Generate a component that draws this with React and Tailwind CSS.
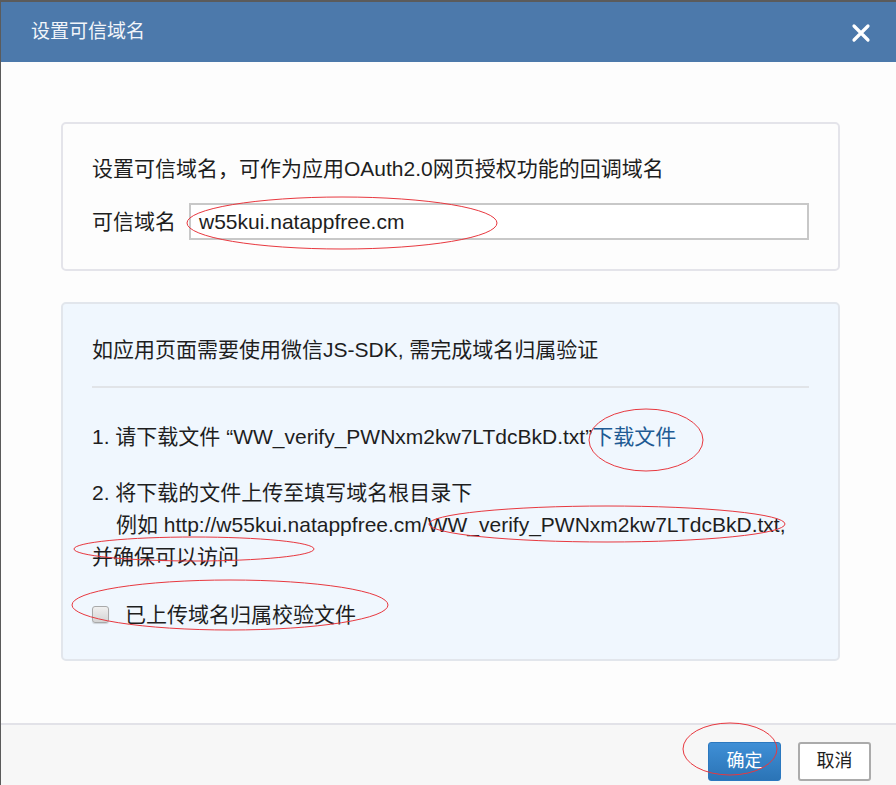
import React from 'react';

const font = { fontFamily: '"Liberation Sans", "Noto Sans CJK SC", sans-serif' };

const App = () => {
    return (
        <div className="relative w-[896px] h-[785px] overflow-hidden bg-[#5b5b5b] pt-[2px] pl-[1px]" style={font}>
            <div className="flex flex-col h-full bg-[#fdfdfd]">
                {/* Header */}
                <div className="h-[60px] shrink-0 bg-[#4c79ab] flex items-center justify-between pl-[30px] pr-[25px]">
                    <span className="text-[19px] text-[#f2f5fa]">设置可信域名</span>
                    <svg width="20" height="20" viewBox="0 0 20 20" className="mt-[1px]">
                        <path d="M3 3 L17 17 M17 3 L3 17" stroke="#ffffff" strokeWidth="3.2" strokeLinecap="round" />
                    </svg>
                </div>

                {/* Body */}
                <div className="flex-1 pl-[60px] pt-[60px] text-[21px] text-[#1e1e1e]">
                    <div className="w-[779px] border-2 border-[#e4e4ea] rounded-[5px] bg-[#fdfdfd] px-[29px] pt-[29px] pb-[29px]">
                        <div className="leading-[31px]">设置可信域名，可作为应用OAuth2.0网页授权功能的回调域名</div>
                        <div className="flex items-center mt-[19px]">
                            <span className="leading-[31px]">可信域名</span>
                            <div className="ml-[13px] flex-1 h-[37px] border-2 border-[#c8c8c8] bg-white flex items-center px-[8px]">
                                w55kui.natappfree.cm
                            </div>
                        </div>
                    </div>

                    <div className="w-[779px] mt-[31px] h-[359px] border-2 border-[#e2e6ec] rounded-[5px] bg-[#f0f7fe] px-[29px] pt-[30px]">
                        <div className="leading-[31px]">如应用页面需要使用微信JS-SDK, 需完成域名归属验证</div>
                        <div className="mt-[21px] h-[2px] bg-[#e1e4e8]" />
                        <div className="mt-[33px] leading-[31px]">
                            1. 请下载文件 “WW_verify_PWNxm2kw7LTdcBkD.txt”<span className="text-[#1f5b94]">下载文件</span>
                        </div>
                        <div className="mt-[25px] leading-[32px]">
                            <div>2. 将下载的文件上传至填写域名根目录下</div>
                            <div className="pl-[24px] whitespace-nowrap">例如 http://w55kui.natappfree.cm/WW_verify_PWNxm2kw7LTdcBkD.txt,</div>
                            <div>并确保可以访问</div>
                        </div>
                        <div className="mt-[26px] flex items-center">
                            <div className="w-[17px] h-[17px] rounded-[3px] border border-[#a9a9a9] bg-gradient-to-b from-[#f0f0f0] to-[#d4d4d4] shadow-[0_1px_1px_rgba(0,0,0,0.15)]" />
                            <span className="ml-[16px] leading-[31px]">已上传域名归属校验文件</span>
                        </div>
                    </div>
                </div>

                {/* Footer */}
                <div className="h-[62px] shrink-0 border-t-2 border-[#e2e2e8] bg-[#f7f7f7] flex justify-end items-start pt-[17px] pr-[25px] gap-[17px] text-[18px]">
                    <button className="w-[73px] h-[39px] rounded-[3px] border border-[#2b78bf] bg-gradient-to-b from-[#3f8fd6] to-[#2b74b6] text-white">
                        确定
                    </button>
                    <button className="w-[73px] h-[39px] rounded-[3px] border-2 border-[#ababab] bg-white text-[#1e1e1e]">
                        取消
                    </button>
                </div>
            </div>

            {/* red annotation marks */}
            <svg className="absolute inset-0 pointer-events-none" width="896" height="785" viewBox="0 0 896 785" fill="none">
                <ellipse cx="342" cy="223" rx="155" ry="26" stroke="#e8383f" strokeWidth="1" />
                <ellipse cx="646" cy="440" rx="57" ry="31" stroke="#e8383f" strokeWidth="1" />
                <ellipse cx="607" cy="524" rx="178" ry="18" stroke="#e8383f" strokeWidth="1" />
                <ellipse cx="194" cy="549" rx="120" ry="12" stroke="#e8383f" strokeWidth="1" />
                <ellipse cx="230" cy="605" rx="158" ry="25" stroke="#e8383f" strokeWidth="1" />
                <ellipse cx="730" cy="749" rx="47" ry="26" stroke="#e8383f" strokeWidth="1" />
            </svg>
        </div>
    );
};

export default App;
